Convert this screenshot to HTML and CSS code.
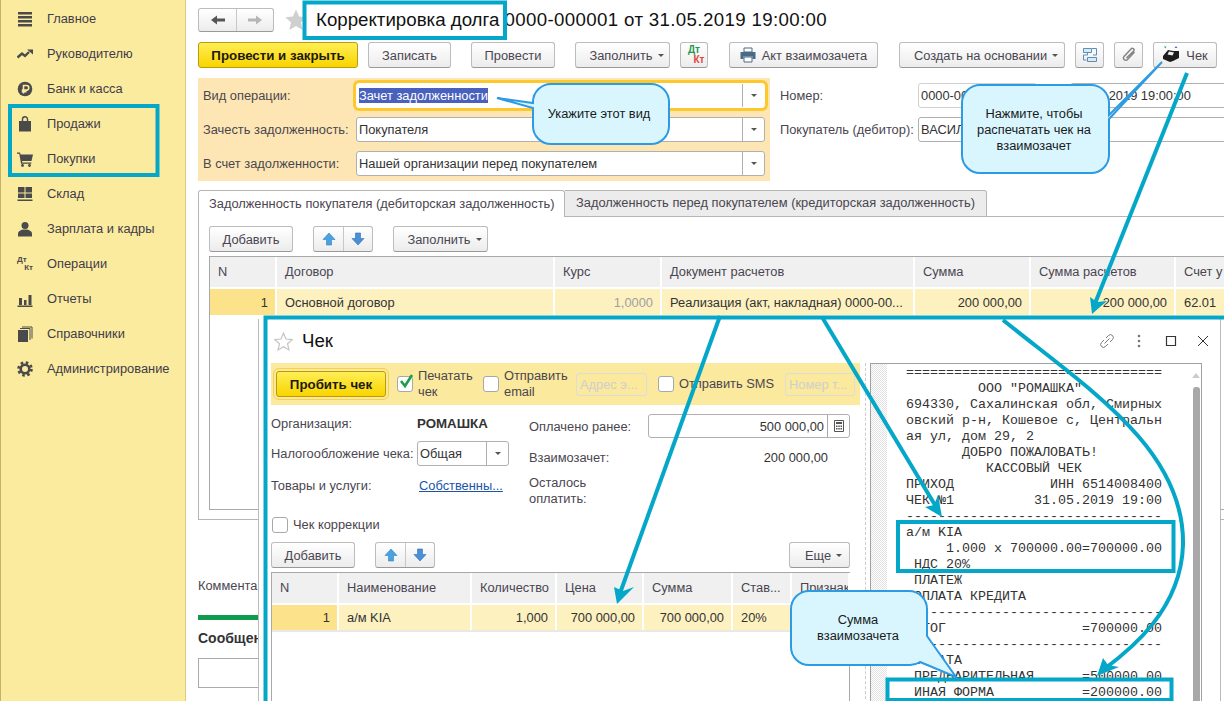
FILE: index.html
```html
<!DOCTYPE html>
<html lang="ru">
<head>
  <meta charset="UTF-8">
  <title>Корректировка долга</title>
  <link rel="stylesheet" href="styles.css">
</head>
<body>
<div class="app">

  <!-- left menu -->
  <aside class="sidebar">
    <div class="nav-item">
      <svg class="nav-ico" viewBox="0 0 16 16"><path d="M1 1h14v2.500H1zM1 5h14v2.500H1zM1 9h14v2.500H1zM1 13h14v2.500H1z"/></svg>
      Главное
    </div>
    <div class="nav-item">
      <svg class="nav-ico" viewBox="0 0 16 16"><path d="M0.500 11.500l4.500-4 3 2.500 4-4" fill="none" stroke="#4a4a4a" stroke-width="2.400"/><path d="M10 3.500h6v5z"/></svg>
      Руководителю
    </div>
    <div class="nav-item">
      <svg class="nav-ico" viewBox="0 0 16 16"><circle cx="8" cy="8" r="7.300"/><path d="M6.500 12.500V4.500H9.500a2.200 2.200 0 0 1 0 4.600H4.800M4.800 10.800H9.500" fill="none" stroke="#fbeb9e" stroke-width="1.600"/></svg>
      Банк и касса
    </div>
    <div class="nav-item">
      <svg class="nav-ico" viewBox="0 0 16 16"><path d="M2 5h12v10.500H2z"/><path d="M5.500 7V3.200a2.500 2.500 0 0 1 5 0V7" fill="none" stroke="#4a4a4a" stroke-width="1.400"/></svg>
      Продажи
    </div>
    <div class="nav-item">
      <svg class="nav-ico" viewBox="0 0 16 16"><path d="M0 1.500h3l.6 2H16l-1.500 6.500H5l.3 1.500h9v1.200H4L2.300 2.800H0z"/><circle cx="5.500" cy="14.500" r="1.400"/><circle cx="12.500" cy="14.500" r="1.400"/></svg>
      Покупки
    </div>
    <div class="nav-item">
      <svg class="nav-ico" viewBox="0 0 16 16"><path d="M1 1h6.500v5.500H1zM8.500 1H15v5.500H8.500zM1 7.500h6.500V12H1zM8.500 7.500H15V12H8.500zM0.500 13.500h15v1.500H0.500z"/></svg>
      Склад
    </div>
    <div class="nav-item">
      <svg class="nav-ico" viewBox="0 0 16 16"><circle cx="8" cy="4.500" r="3.500"/><path d="M1 15.500v-3c0-2 2.500-3.500 5-4h4c2.500.5 5 2 5 4v3z"/></svg>
      Зарплата и кадры
    </div>
    <div class="nav-item">
      <span class="nav-ico dk-grey"><span>Дт</span><span>Кт</span></span>
      Операции
    </div>
    <div class="nav-item">
      <svg class="nav-ico" viewBox="0 0 16 16"><path d="M2 7h3v7H2zM7 9h2.500v5H7zM11.500 4h3v10h-3zM0.500 14.500h15V16H.5z"/></svg>
      Отчеты
    </div>
    <div class="nav-item">
      <svg class="nav-ico" viewBox="0 0 16 16"><path d="M1 4h10v12H1z"/><path d="M3 2.500h10V14M5 1h10v11.500" fill="none" stroke="#4a4a4a"/></svg>
      Справочники
    </div>
    <div class="nav-item">
      <svg class="nav-ico" viewBox="0 0 16 16"><circle cx="8" cy="8" r="4.300" fill="none" stroke="#4a4a4a" stroke-width="2.600"/><circle cx="8" cy="8" r="6.500" fill="none" stroke="#4a4a4a" stroke-width="2.600" stroke-dasharray="2.550 2.550"/></svg>
      Администрирование
    </div>
  </aside>

  <!-- document form -->
  <main class="doc">
    <div class="doc-head">
      <div class="nav-btns">
        <span class="seg seg-wide"><svg class="ico14" viewBox="0 0 14 14"><path d="M0 7l6-4.500V5.500h8v3H6v3z" fill="#555"/></svg></span>
        <span class="seg seg-wide"><svg class="ico14" viewBox="0 0 14 14"><path d="M14 7L8 2.500V5.500H0v3h8v3z" fill="#b5b5b5"/></svg></span>
      </div>
      <svg class="star-big" viewBox="0 0 24 24"><path d="M12 0.500l3.400 7.800 8.300.8-6.300 5.500 1.900 8.200L12 18.500l-7.300 4.300 1.900-8.200L.3 9.100l8.300-.8z" fill="#cfcfcf"/></svg>
      <h1 class="doc-title">Корректировка долга <span class="doc-number">0000-000001 от 31.05.2019 19:00:00</span></h1>
    </div>

    <div class="toolbar">
      <div class="btn-group">
        <button class="btn btn-primary w160">Провести и закрыть</button>
        <button class="btn w83">Записать</button>
      </div>
      <button class="btn w84">Провести</button>
      <div class="btn-group">
        <button class="btn btn-menu w95">Заполнить <i class="caret"></i></button>
        <button class="btn w28"><span class="dk-color"><span>Дт</span><span>Кт</span></span></button>
      </div>
      <button class="btn btn-step w149">
        <svg class="ico16" viewBox="0 0 16 16"><path d="M4 1h8v4H4z" fill="#fff" stroke="#4a6a85"/><path d="M0.500 5h15v7h-3V9.500h-9V12h-3z" fill="#4a6a85"/><path d="M4 10h8v5H4z" fill="#fff" stroke="#4a6a85"/></svg>
        Акт взаимозачета
      </button>
      <div class="btn-group btn-step">
        <button class="btn btn-menu w166">Создать на основании <i class="caret"></i></button>
        <button class="btn w29">
          <svg class="ico18" viewBox="0 0 18 18"><g fill="#dbe9f4" stroke="#5b8fb5"><path d="M2.500 2.500h8v4h-8zM6.500 11.500h9v4h-9z"/></g><path d="M11 2.500h4.500V9H12M6.500 7v2H2.500v5h3" fill="none" stroke="#5b8fb5"/></svg>
        </button>
        <button class="btn w29">
          <svg class="ico16" viewBox="0 0 16 16"><path d="M13.500 5L6.500 12.500a2.300 2.300 0 0 1-3.500-3L10 2a1.600 1.600 0 0 1 2.600 2L5.500 11" fill="none" stroke="#858585" stroke-width="1.500"/></svg>
        </button>
        <button class="btn w64">
          <svg class="ico18" viewBox="0 0 18 18"><path d="M2 0.500l2.500 0-1.200 2z" fill="#2f9e4f"/><path d="M12.500 2l1.500-2 1.500 2z" fill="#4d6fd0"/><path d="M1 10l5-6 5 1 6 0v7l-6 3-3 1-7-3z" fill="#1c1c1c"/><path d="M7 5.500l5 1-1.500 3-5-1z" fill="#f2f2f2"/></svg>
          Чек
        </button>
      </div>
    </div>

    <div class="form-top">
      <div class="op-panel">
        <div class="op-row">
          <span class="op-label">Вид операции:</span>
          <div class="field field-focus"><span class="field-text"><span class="selected">Зачет задолженности</span></span><span class="drop"><i class="caret"></i></span></div>
        </div>
        <div class="op-row">
          <span class="op-label">Зачесть задолженность:</span>
          <div class="field"><span class="field-text">Покупателя</span><span class="drop"><i class="caret"></i></span></div>
        </div>
        <div class="op-row">
          <span class="op-label">В счет задолженности:</span>
          <div class="field"><span class="field-text">Нашей организации перед покупателем</span><span class="drop"><i class="caret"></i></span></div>
        </div>
      </div>
      <div class="doc-fields">
        <div class="op-row">
          <span class="doc-label">Номер:</span>
          <div class="field field-light w119"><span class="field-text">0000-000001</span></div>
          <span class="date-word"></span>
          <div class="field field-date"><span class="field-text">31.05.2019 19:00:00</span></div>
        </div>
        <div class="op-row">
          <span class="doc-label">Покупатель (дебитор):</span>
          <div class="field field-grow"><span class="field-text">ВАСИЛ</span></div>
        </div>
      </div>
    </div>

    <div class="tabs">
      <div class="tab tab-active">Задолженность покупателя (дебиторская задолженность)</div>
      <div class="tab">Задолженность перед покупателем (кредиторская задолженность)</div>
    </div>
    <div class="tab-panel">
      <div class="table-tools">
        <button class="btn w84">Добавить</button>
        <div class="updown">
          <span class="seg"><svg class="ico14" viewBox="0 0 14 14"><path d="M7 1l6 6.500H9.500V13h-5V7.500H1z" fill="#4aa3e0" stroke="#2f7fc0" stroke-width=".6"/></svg></span>
          <span class="seg"><svg class="ico14" viewBox="0 0 14 14"><path d="M7 13L1 6.500h3.500V1h5v5.500H13z" fill="#4a90d9" stroke="#2f6fb0" stroke-width=".6"/></svg></span>
        </div>
        <button class="btn btn-menu w95">Заполнить <i class="caret"></i></button>
      </div>
      <div class="grid-wrap grid-wide">
        <table class="grid">
          <colgroup><col class="c66"><col class="c278"><col class="c107"><col class="c253"><col class="c116"><col class="c145"><col class="c114"></colgroup>
          <tr><th>N</th><th>Договор</th><th>Курс</th><th>Документ расчетов</th><th>Сумма</th><th>Сумма расчетов</th><th>Счет у</th></tr>
          <tr>
            <td class="num cell-n">1</td><td>Основной договор</td><td class="num muted">1,0000</td><td>Реализация (акт, накладная) 0000-00...</td><td class="num">200 000,00</td><td class="num">200 000,00</td><td>62.01</td>
          </tr>
        </table>
      </div>
    </div>

    <div class="comment-label">Коммента</div>
    <div class="green-bar"></div>
    <div class="messages-title">Сообщен</div>
    <div class="messages-box"></div>
  </main>

  <!-- receipt window over the form -->
  <section class="dialog">
    <div class="dialog-head">
      <svg class="star-small" viewBox="0 0 24 24"><path d="M12 1.500l3.200 7.300 7.900.8-6 5.200 1.800 7.800L12 18.500l-6.900 4.100 1.800-7.800-6-5.200 7.900-.8z" fill="none" stroke="#c4c4c4" stroke-width="1.500"/></svg>
      <h2 class="dialog-title">Чек</h2>
      <div class="dialog-actions">
        <svg class="ico16" viewBox="0 0 16 16"><path d="M7 5l2.500-2.500a2.600 2.600 0 0 1 4 4L11 9M9 11l-2.500 2.500a2.600 2.600 0 0 1-4-4L5 7M5.500 10.500l5-5" fill="none" stroke="#777"/></svg>
        <svg class="ico16" viewBox="0 0 16 16"><circle cx="8" cy="3" r="1.300" fill="#777"/><circle cx="8" cy="8" r="1.300" fill="#777"/><circle cx="8" cy="13" r="1.300" fill="#777"/></svg>
        <svg class="ico16" viewBox="0 0 16 16"><path d="M3.500 3.500h9v9h-9z" fill="none" stroke="#333" stroke-width="1.200"/></svg>
        <svg class="ico16" viewBox="0 0 16 16"><path d="M3 3l10 10M13 3L3 13" fill="none" stroke="#333"/></svg>
      </div>
    </div>
    <div class="dialog-body">
      <div class="dialog-left">
        <div class="check-bar">
          <button class="btn btn-primary btn-outlined w110">Пробить чек</button>
          <div class="check-item">
            <span class="checkbox"><svg class="tick" viewBox="0 0 16 16"><path d="M3 7l4 5 7-11" fill="none" stroke="#1d9c4a" stroke-width="2.600"/></svg></span>
            <span class="check-text w60">Печатать чек</span>
          </div>
          <div class="check-item">
            <span class="checkbox"></span>
            <span class="check-text w67">Отправить email</span>
          </div>
          <span class="ghost-input w71">Адрес э...</span>
          <div class="check-item check-sms">
            <span class="checkbox"></span>
            <span class="check-text">Отправить SMS</span>
          </div>
          <span class="ghost-input w70">Номер т...</span>
        </div>

        <div class="check-form">
          <div class="form-col">
            <div class="form-row"><span class="form-label">Организация:</span><b class="org">РОМАШКА</b></div>
            <div class="form-row form-row-tax"><span class="form-label">Налогообложение чека:</span><div class="field w92"><span class="field-text">Общая</span><span class="drop"><i class="caret"></i></span></div></div>
            <div class="form-row form-row-goods"><span class="form-label">Товары и услуги:</span><a class="link">Собственны...</a></div>
          </div>
          <div class="form-col form-col-right">
            <div class="form-row form-row-input"><span class="pay-label">Оплачено ранее:</span>
              <div class="field field-money"><span class="field-text">500 000,00</span><span class="drop">
                <svg class="ico14" viewBox="0 0 14 14"><path d="M2.500 1.500h9v11h-9z" fill="none" stroke="#555"/><path d="M4 3h6v2H4zM4 6.500h1.500V8H4zM6.300 6.500h1.500V8H6.300zM8.500 6.500H10V8H8.500zM4 9h1.500v1.500H4zM6.300 9h1.500v1.500H6.300zM8.500 9H10v1.500H8.500z" fill="#555"/></svg></span></div>
            </div>
            <div class="form-row form-row-offset"><span class="pay-label">Взаимозачет:</span><span class="pay-value">200 000,00</span></div>
            <div class="form-row form-row-rest"><span class="pay-label w90">Осталось оплатить:</span></div>
          </div>
        </div>

        <div class="check-item check-fix"><span class="checkbox"></span><span class="check-text">Чек коррекции</span></div>

        <div class="table-tools table-tools-dialog">
          <button class="btn w84">Добавить</button>
          <div class="updown">
            <span class="seg"><svg class="ico14" viewBox="0 0 14 14"><path d="M7 1l6 6.500H9.500V13h-5V7.500H1z" fill="#4aa3e0" stroke="#2f7fc0" stroke-width=".6"/></svg></span>
            <span class="seg"><svg class="ico14" viewBox="0 0 14 14"><path d="M7 13L1 6.500h3.500V1h5v5.500H13z" fill="#4a90d9" stroke="#2f6fb0" stroke-width=".6"/></svg></span>
          </div>
          <button class="btn btn-menu w61 push-right">Еще <i class="caret"></i></button>
        </div>
        <div class="grid-wrap grid-dialog">
          <table class="grid">
            <colgroup><col class="c66"><col class="c133"><col class="c85"><col class="c87"><col class="c89"><col class="c59"><col class="c58"></colgroup>
            <tr><th>N</th><th>Наименование</th><th>Количество</th><th>Цена</th><th>Сумма</th><th>Став...</th><th>Признак</th></tr>
            <tr class="row-line"><td class="num cell-n">1</td><td>а/м KIA</td><td class="num">1,000</td><td class="num">700 000,00</td><td class="num">700 000,00</td><td>20%</td><td></td></tr>
          </table>
        </div>
      </div>

      <div class="print-area">
        <div class="print-gutter"></div>
<pre class="receipt">================================
         ООО "РОМАШКА"
694330, Сахалинская обл, Смирных
овский р-н, Кошевое с, Центральн
ая ул, дом 29, 2
       ДОБРО ПОЖАЛОВАТЬ!
          КАССОВЫЙ ЧЕК
ПРИХОД            ИНН 6514008400
ЧЕК №1          31.05.2019 19:00
--------------------------------
а/м KIA
     1.000 х 700000.00=700000.00
 НДС 20%
 ПЛАТЕЖ
 ОПЛАТА КРЕДИТА
--------------------------------
 ИТОГ                 =700000.00
--------------------------------
 ОПЛАТА
 ПРЕДВАРИТЕЛЬНАЯ      =500000.00
 ИНАЯ ФОРМА           =200000.00</pre>
        <div class="scrollbar"><i class="scroll-up"></i><i class="scroll-thumb"></i></div>
      </div>
    </div>
  </section>

  <!-- teal marks and callouts drawn over the screenshot -->
  <svg class="notes" viewBox="0 0 1224 701">
    <g class="mark">
      <path d="M304.500 2.500H505V38H304.500z"/>
      <path d="M10 106H157.500V175H10z"/>
      <path d="M1224 317.500H265.500V701"/>
      <path d="M898 522H1173.500V571H898z"/>
      <path d="M887.500 679.500H1171.500V700H887.500z"/>
      <path d="M1187 73L1094 306"/>
      <path d="M720 316L619 596"/>
      <path d="M822 317L938 510"/>
      <path d="M1003 320C1090 390 1185 450 1183 545C1181 610 1130 650 1103 670"/>
    </g>
    <g class="mark-head">
      <path d="M1092 314L1090 297L1097 302L1107 301z"/>
      <path d="M617 604L614 587L623 591L634 587z"/>
      <path d="M942 517L925 507L934 505L938 495z"/>
      <path d="M1097 676L1103 658L1108 665L1119 667z"/>
    </g>
    <g class="bubble">
      <path d="M551 84H651A18 18 0 0 1 669 102V126A18 18 0 0 1 651 144H551A18 18 0 0 1 533 126V108L497 98L533 103V102A18 18 0 0 1 551 84z"/>
      <path d="M980 85H1091A18 18 0 0 1 1109 103V115L1162 62L1109 119V155A18 18 0 0 1 1091 173H980A18 18 0 0 1 962 155V103A18 18 0 0 1 980 85z"/>
      <path d="M809 591H909A18 18 0 0 1 927 609V636L956 677L920 662A18 18 0 0 1 909 665H809A18 18 0 0 1 791 647V609A18 18 0 0 1 809 591z"/>
    </g>
    <g class="bubble-text">
      <text x="599" y="118">Укажите этот вид</text>
      <text x="1034" y="118">Нажмите, чтобы</text>
      <text x="1034" y="134">распечатать чек на</text>
      <text x="1034" y="150">взаимозачет</text>
      <text x="858" y="624">Сумма</text>
      <text x="858" y="640">взаимозачета</text>
    </g>
  </svg>
</div>
</body>
</html>
```

FILE: styles.css
```css
* {
  box-sizing: border-box;
}

body {
  margin: 0;
  font-family: "Liberation Sans", Arial, sans-serif;
  font-size: 12.85px;
  color: #4a4650;
  background: #fff;
}

.app {
  position: relative;
  display: flex;
  width: 1224px;
  height: 701px;
  overflow: hidden;
}

/* sidebar */
.sidebar {
  flex: 0 0 186px;
  padding-top: 1px;
  background: #fbeb9e;
  border-left: 1px solid #c4b56a;
  border-right: 1px solid #d8cb85;
}

.nav-item {
  display: flex;
  align-items: center;
  height: 35px;
  padding-left: 16px;
  color: #413c4a;
}

.nav-ico {
  flex: 0 0 16px;
  width: 16px;
  height: 16px;
  margin-right: 14px;
  fill: #4a4a4a;
}

.dk-grey {
  display: flex;
  flex-direction: column;
  font-size: 8px;
  font-weight: bold;
  line-height: 8px;
  color: #4a4a4a;
}

.dk-grey span:last-child {
  align-self: flex-end;
}

/* document */
.doc {
  flex: 1;
  min-width: 0;
  padding: 8px 0 0 12px;
  overflow: hidden;
}

.doc-head {
  display: flex;
  align-items: center;
  height: 24px;
  margin-bottom: 10px;
}

.nav-btns, .updown {
  display: flex;
  height: 26px;
  background: linear-gradient(#fff, #ececec);
  border: 1px solid #bcbcbc;
  border-bottom-color: #999;
  border-radius: 3px;
}

.nav-btns {
  height: 24px;
}

.seg {
  display: flex;
  align-items: center;
  justify-content: center;
  width: 29px;
}

.seg + .seg {
  border-left: 1px solid #c8c8c8;
}

.seg-wide {
  width: 37px;
}

.ico14 {
  width: 14px;
  height: 14px;
}

.ico16 {
  width: 16px;
  height: 16px;
}

.ico18 {
  width: 18px;
  height: 18px;
}

.star-big {
  width: 22px;
  height: 22px;
  margin-left: 11px;
}

.doc-title {
  margin: 0 0 0 9px;
  font-size: 18.7px;
  font-weight: normal;
  color: #111;
  white-space: nowrap;
}

.doc-number {
  letter-spacing: 0.35px;
}

.toolbar {
  display: flex;
  gap: 20px;
  margin-bottom: 10px;
}

.btn-group {
  display: flex;
  gap: 10px;
}

.btn-step {
  margin-left: 1px;
}

.btn {
  display: flex;
  flex: none;
  align-items: center;
  justify-content: center;
  gap: 6px;
  height: 26px;
  padding: 0;
  font: inherit;
  color: #4a4650;
  background: linear-gradient(#fff, #ececec);
  border: 1px solid #bcbcbc;
  border-bottom-color: #999;
  border-radius: 3px;
}

.btn-menu {
  padding-left: 8px;
}

.btn-primary {
  font-size: 13.3px;
  font-weight: bold;
  color: #1d1a10;
  background: linear-gradient(#ffee55, #f9d400);
  border-color: #b89c10;
}

.btn-outlined {
  outline: 1px solid #f7cf4a;
  outline-offset: 2px;
}

.caret {
  display: inline-block;
  margin-left: -1px;
  border-top: 3px solid #555;
  border-left: 3px solid transparent;
  border-right: 3px solid transparent;
}

.dk-color {
  display: flex;
  flex-direction: column;
  width: 21px;
  font-size: 10px;
  font-weight: bold;
  line-height: 10px;
  color: #1f9a4c;
}

.dk-color span:last-child {
  align-self: flex-end;
  color: #e2453c;
}

.w28 { width: 28px; }
.w29 { width: 29px; }
.w60 { width: 60px; }
.w61 { width: 61px; }
.w64 { width: 64px; }
.w67 { width: 67px; }
.w70 { width: 70px; }
.w71 { width: 71px; }
.w83 { width: 83px; }
.w84 { width: 84px; }
.w90 { width: 90px; }
.w92 { width: 92px; }
.w95 { width: 95px; }
.w110 { width: 110px; }
.w119 { width: 119px; }
.w149 { width: 149px; }
.w160 { width: 160px; }
.w166 { width: 166px; }

/* fields */
.form-top {
  display: flex;
  margin-bottom: 9px;
}

.op-panel {
  flex: 0 0 572px;
  height: 103px;
  padding: 5px 0 0 5px;
  background: #fde6b3;
}

.op-row {
  display: flex;
  align-items: center;
  height: 25px;
  margin-bottom: 9px;
}

.op-label {
  flex: 0 0 153px;
}

.field {
  display: flex;
  align-items: center;
  height: 25px;
  color: #333;
  background: #fff;
  border: 1px solid #b0b0b0;
  border-radius: 3px;
}

.op-row .field {
  flex: 0 0 409px;
}

.field-focus {
  box-shadow: 0 0 0 3px #fdc72e;
  border-color: #fff;
}

.field-text {
  flex: 1;
  min-width: 0;
  padding-left: 2px;
  overflow: hidden;
  white-space: nowrap;
}

.selected {
  padding: 1px 0;
  color: #fff;
  background: #4a60bd;
}

.drop {
  display: flex;
  flex: 0 0 22px;
  align-items: center;
  justify-content: center;
  height: 100%;
  border-left: 1px solid #b0b0b0;
}

.drop .caret {
  margin-left: 0;
}

.doc-fields {
  flex: 1;
  padding: 5px 0 0 10px;
}

.doc-label {
  flex: 0 0 138px;
}

.op-row .field.w119 {
  flex: 0 0 119px;
}

.field-light {
  border-color: #d0d0d0;
}

.date-word {
  flex: 0 0 33px;
}

.op-row .field-date, .op-row .field-grow {
  flex: 0 0 400px;
}

/* tabs */
.tabs {
  display: flex;
  width: 1100px;
  height: 27px;
}

.tab {
  display: flex;
  align-items: center;
  width: 422px;
  padding: 0 0 2px 11px;
  background: #ececec;
  border: 1px solid #b5b5b5;
  border-left: 0;
  border-radius: 0 3px 0 0;
}

.tab-active {
  width: 367px;
  padding-left: 10px;
  background: #fff;
  border-left: 1px solid #b5b5b5;
  border-bottom: 0;
  border-radius: 3px 3px 0 0;
}

.tab-panel {
  position: relative;
  width: 1100px;
  height: 303px;
  padding: 9px 0 0 10px;
  border: 1px solid #b5b5b5;
  border-top: 0;
  border-right: 0;
}

.tabs::after {
  content: "";
  flex: 1;
  border-bottom: 1px solid #b5b5b5;
}

.table-tools {
  display: flex;
  gap: 20px;
  margin-bottom: 4px;
}

/* tables */
.grid-wrap {
  border: 1px solid #a9a9a9;
}

.grid-wide {
  width: 1080px;
  height: 254px;
  border-right: 0;
}

.grid {
  width: 100%;
  table-layout: fixed;
  border-collapse: collapse;
}

.grid th {
  height: 31px;
  padding: 0 8px 2px;
  font-weight: normal;
  text-align: left;
  white-space: nowrap;
  overflow: hidden;
  background: #f0f0f0;
  border-right: 2px solid #fff;
  border-bottom: 2px solid #fff;
}

.grid td {
  height: 27px;
  padding: 0 8px;
  color: #333;
  white-space: nowrap;
  overflow: hidden;
  background: #fdf1c0;
  border-right: 2px solid #fff;
}

.grid .num {
  padding-right: 7px;
  text-align: right;
}

.grid .muted {
  color: #a0a0a0;
}

.grid .cell-n {
  background: #fde28c;
}

.row-line td {
  border-bottom: 2px solid #e8e8e8;
}

.c58 { width: 58px; }
.c59 { width: 59px; }
.c66 { width: 66px; }
.c85 { width: 85px; }
.c87 { width: 87px; }
.c89 { width: 89px; }
.c107 { width: 107px; }
.c114 { width: 114px; }
.c116 { width: 116px; }
.c133 { width: 133px; }
.c145 { width: 145px; }
.c253 { width: 253px; }
.c278 { width: 278px; }

/* bottom of the document */
.comment-label {
  height: 16px;
  margin-top: 58px;
  white-space: nowrap;
}

.green-bar {
  width: 200px;
  height: 5px;
  margin-top: 21px;
  background: #0f9a4e;
}

.messages-title {
  margin-top: 9px;
  font-size: 14px;
  font-weight: bold;
  line-height: 18px;
  color: #333;
  white-space: nowrap;
}

.messages-box {
  width: 200px;
  height: 30px;
  margin-top: 11px;
  border: 1px solid #aaa;
}

/* receipt window */
.dialog {
  position: absolute;
  left: 258px;
  top: 319px;
  width: 963px;
  height: 400px;
  background: #fff;
  border-left: 1px solid #bbb;
  border-right: 1px solid #bbb;
}

.dialog-head {
  display: flex;
  align-items: center;
  height: 44px;
  padding-left: 15px;
}

.star-small {
  width: 19px;
  height: 19px;
}

.dialog-title {
  margin: 0 0 0 9px;
  font-size: 18.7px;
  font-weight: normal;
  color: #111;
}

.dialog-actions {
  display: flex;
  gap: 16px;
  margin-left: auto;
  padding-right: 9px;
}

.dialog-body {
  display: flex;
  height: 356px;
}

.dialog-left {
  flex: 0 0 607px;
  margin-right: 4px;
  padding-left: 12px;
  border-right: 1px dashed #ccc;
}

.check-bar {
  display: flex;
  align-items: center;
  width: 589px;
  height: 42px;
  padding-left: 5px;
  background: #fbe99d;
}

.check-item {
  display: flex;
  align-items: center;
  gap: 5px;
  margin-left: 11px;
}

.check-item + .check-item {
  margin-left: 5px;
}

.check-bar > .ghost-input {
  margin-left: 5px;
}

.check-bar > .check-sms {
  margin-left: 11px;
}

.check-sms {
  width: 122px;
}

.checkbox {
  display: flex;
  flex: 0 0 16px;
  width: 16px;
  height: 16px;
  background: #fff;
  border: 1px solid #a8a8a8;
  border-radius: 3px;
}

.tick {
  flex: 0 0 16px;
  width: 16px;
  height: 16px;
  margin-top: -3px;
}

.check-text {
  line-height: 16px;
}

.ghost-input {
  height: 23px;
  padding: 3px;
  line-height: 16px;
  color: #cfcfcf;
  white-space: nowrap;
  overflow: hidden;
  background: #fbe99d;
  border: 1px solid #dcdcdc;
  border-radius: 3px;
}

.check-form {
  display: flex;
  height: 112px;
}

.form-col {
  flex: 0 0 258px;
  padding-top: 8px;
}

.form-col-right {
  flex: 0 0 321px;
  padding-top: 9px;
}

.form-row {
  display: flex;
  align-items: center;
  min-height: 20px;
}

.form-row-tax {
  height: 24px;
  margin-top: 8px;
}

.form-row-goods {
  margin-top: 10px;
}

.form-label {
  flex: 0 0 146px;
}

.org {
  font-size: 13.3px;
  color: #333;
}

.link {
  margin-left: 2px;
  color: #1c55a8;
  text-decoration: underline;
}

.form-row-input {
  height: 24px;
}

.pay-label {
  flex: 0 0 119px;
}

.pay-label.w90 {
  flex: 0 0 90px;
  line-height: 16px;
}

.field-money {
  flex: 0 0 202px;
  height: 24px;
  text-align: right;
}

.field-money .field-text {
  padding-right: 3px;
}

.field-money .drop {
  border-color: #a8a8a8;
}

.form-row-offset {
  margin-top: 9px;
}

.pay-value {
  flex: 0 0 180px;
  text-align: right;
  color: #333;
}

.form-row-rest {
  margin-top: 8px;
}

.check-fix {
  height: 16px;
  margin-left: 1px;
}

.table-tools-dialog {
  width: 579px;
  margin-top: 9px;
}

.push-right {
  margin-left: auto;
}

.grid-dialog {
  width: 579px;
  height: 160px;
}

/* print preview */
.print-area {
  display: flex;
  width: 332px;
  height: 356px;
  border: 1px solid #a0a0a0;
  border-bottom: 0;
}

.print-gutter {
  flex: 0 0 16px;
  background: repeating-conic-gradient(#e2e2e2 0 25%, #fff 0 50%) 0 0 / 2px 2px;
}

.receipt {
  flex: 0 0 305px;
  margin: 0;
  padding: 1px 0 0 19px;
  font-family: "Liberation Mono", "Courier New", monospace;
  font-size: 13.33px;
  line-height: 16px;
  color: #333;
}

.scrollbar {
  display: flex;
  flex: 0 0 8px;
  flex-direction: column;
  align-items: center;
  padding-top: 9px;
}

.scroll-up {
  border-bottom: 5px solid #ccc;
  border-left: 4px solid transparent;
  border-right: 4px solid transparent;
}

.scroll-thumb {
  width: 7px;
  height: 320px;
  margin-top: 9px;
  background: #a8a8a8;
  border-radius: 3px;
}

/* annotations */
.notes {
  position: absolute;
  left: 0;
  top: 0;
  width: 1224px;
  height: 701px;
  pointer-events: none;
}

.mark path {
  fill: none;
  stroke: #04a7c7;
  stroke-width: 4px;
}

.mark-head path {
  fill: #04a7c7;
}

.bubble path {
  fill: #d9f6ff;
  stroke: #2d9be3;
  stroke-width: 2px;
}

.bubble-text text {
  font-family: "Liberation Sans", Arial, sans-serif;
  font-size: 12.85px;
  text-anchor: middle;
  fill: #1a1a1a;
}
```
